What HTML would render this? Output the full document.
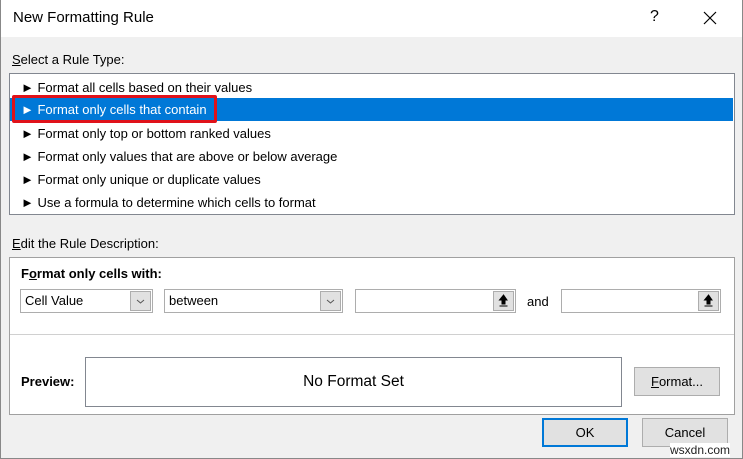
<!DOCTYPE html><html><head><style>
*{margin:0;padding:0;box-sizing:border-box}
body{width:743px;height:459px;background:#f0f0f0;font-family:"Liberation Sans",sans-serif;font-size:13px;color:#000;position:relative;overflow:hidden}
.a{position:absolute}
.t{position:absolute;white-space:nowrap}
u{text-decoration:underline}
.row{position:absolute;left:10px;width:723px;height:23px;line-height:23px;padding-left:11px}
.dd{position:absolute;height:24px;background:#fff;border:1px solid #adadad;line-height:22px;padding-left:4px}
.arr{position:absolute;right:1px;top:1px;width:21px;height:20px;background:#e1e1e1;border:1px solid #adadad}
.btn{position:absolute;background:#e1e1e1;border:1px solid #adadad;text-align:center}
</style></head><body>
<div class="a" style="left:0;top:0;width:743px;height:37px;background:#fff"></div>
<div class="a" style="left:0;top:0;width:1px;height:459px;background:#888"></div>
<div class="a" style="left:742px;top:0;width:1px;height:459px;background:#888"></div>
<div class="a" style="left:0;top:458px;width:743px;height:1px;background:#888"></div>
<div class="t" style="left:13px;top:9px;font-size:15px">New Formatting Rule</div>
<div class="t" style="left:650px;top:8px;font-size:16px">?</div>
<svg class="a" style="left:703px;top:11px" width="14" height="14"><path d="M1 1L13 13M13 1L1 13" stroke="#000" stroke-width="1.2"/></svg>
<div class="t" style="left:12px;top:52px"><u>S</u>elect a Rule Type:</div>
<div class="a" style="left:9px;top:73px;width:726px;height:142px;background:#fff;border:1px solid #828790"></div>
<div class="row" style="top:76px">► Format all cells based on their values</div>
<div class="row" style="top:98px;background:#0078d7;color:#fff">► Format only cells that contain</div>
<div class="a" style="left:12px;top:95px;width:205px;height:28px;border:3px solid #e0121a;border-radius:2px"></div>
<div class="row" style="top:122px">► Format only top or bottom ranked values</div>
<div class="row" style="top:145px">► Format only values that are above or below average</div>
<div class="row" style="top:168px">► Format only unique or duplicate values</div>
<div class="row" style="top:191px">► Use a formula to determine which cells to format</div>
<div class="t" style="left:12px;top:236px"><u>E</u>dit the Rule Description:</div>
<div class="a" style="left:9px;top:257px;width:726px;height:158px;background:#fff;border:1px solid #a0a0a0"></div>
<div class="a" style="left:10px;top:334px;width:724px;height:1px;background:#d0d0d0"></div>
<div class="t" style="left:21px;top:266px;font-weight:bold">F<u>o</u>rmat only cells with:</div>
<div class="dd" style="left:20px;top:289px;width:133px">Cell Value<div class="arr"><svg width="19" height="18"><path d="M6 8l3.5 3 3.5-3" fill="none" stroke="#555"/></svg></div></div>
<div class="dd" style="left:164px;top:289px;width:179px">between<div class="arr"><svg width="19" height="18"><path d="M6 8l3.5 3 3.5-3" fill="none" stroke="#555"/></svg></div></div>
<div class="dd" style="left:355px;top:289px;width:161px"><div class="arr"><svg width="19" height="18"><path d="M9.5 3l-4 5h2.5v4h3V8H13z M5.5 14h8" fill="#000" stroke="#000" stroke-width="1"/></svg></div></div>
<div class="t" style="left:527px;top:294px">and</div>
<div class="dd" style="left:561px;top:289px;width:160px"><div class="arr"><svg width="19" height="18"><path d="M9.5 3l-4 5h2.5v4h3V8H13z M5.5 14h8" fill="#000" stroke="#000" stroke-width="1"/></svg></div></div>
<div class="t" style="left:21px;top:374px;font-weight:bold">Preview:</div>
<div class="a" style="left:85px;top:357px;width:537px;height:50px;border:1px solid #828790;background:#fff;text-align:center;line-height:48px;font-size:15.5px">No Format Set</div>
<div class="btn" style="left:634px;top:367px;width:86px;height:29px;line-height:27px"><u>F</u>ormat...</div>
<div class="btn" style="left:542px;top:418px;width:86px;height:29px;line-height:25px;border:2px solid #0078d7">OK</div>
<div class="btn" style="left:642px;top:418px;width:86px;height:29px;line-height:27px">Cancel</div>
<div class="t" style="left:670px;top:443px;font-size:12px;color:#222;background:#fff">wsxdn.com</div>
</body></html>
